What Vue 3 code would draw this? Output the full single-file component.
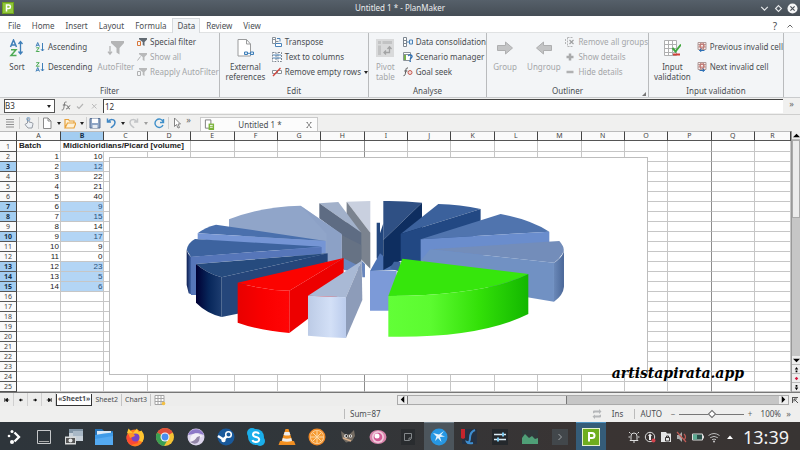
<script setup>
const columns = 'ABCDEFGHIJKLMNOPQR'.split('')
const batches = [10, 12, 22, 21, 40, 9, 15, 14, 17, 9, 0, 23, 5, 6]
const selectedRows = [3, 7, 8, 10, 13, 14, 15]
const rows = Array.from({ length: 24 }, (_, i) => {
  const n = i + 2
  const value = batches[i]
  return {
    n,
    batch: value === undefined ? '' : i + 1,
    value: value === undefined ? '' : value,
    selected: selectedRows.includes(n),
  }
})
const restColumns = columns.slice(2)
const menu = ['File', 'Home', 'Insert', 'Layout', 'Formula', 'Data', 'Review', 'View']
const strong = (c) => c === 'H' || c === 'P'
</script>

<template>
  <div class="app">
    <header class="titlebar">
      <svg class="logo" viewBox="0 0 12 12"><rect width="12" height="12" fill="#6fa01c" /><rect x="1" y="1" width="10" height="10" fill="#8fc63a" /><path d="M4.500 9.500V3h2.200a1.700 1.700 0 0 1 0 3.500H4.500" fill="none" stroke="#fff" stroke-width="1.500" /></svg>
      <h1>Untitled 1 * - PlanMaker</h1>
      <div class="winbtns">
        <button aria-label="Minimize"><svg viewBox="0 0 10 10"><path d="M2 3.500l3 3 3-3" fill="none" stroke="#e8eaec" /></svg></button>
        <button aria-label="Restore"><svg viewBox="0 0 10 10"><path d="M5 2.300L7.700 5 5 7.700 2.300 5z" fill="none" stroke="#e8eaec" /></svg></button>
        <button aria-label="Close"><svg viewBox="0 0 12 12"><circle cx="6" cy="6" r="5.500" fill="#f5f6f7" /><path d="M3.700 3.700l4.600 4.600M8.300 3.700L3.700 8.300" stroke="#454c54" stroke-width="1.200" /></svg></button>
      </div>
    </header>

    <nav class="menu">
      <button v-for="m in menu" :key="m" :class="{ active: m === 'Data' }">{{ m }}</button>
      <span class="grow"></span>
      <button class="help">?</button>
      <button class="fold" aria-label="Collapse ribbon"><svg viewBox="0 0 8 8"><path d="M1.500 5.500L4 3l2.500 2.500" fill="none" stroke="#666" /></svg></button>
    </nav>

    <section class="ribbon">
      <div class="group">
        <div class="tools">
          <button class="big sort">
            <svg viewBox="0 0 18 18"><path d="M2.500 8L5.500 1l3 7M3.500 6h4" fill="none" stroke="#3f7fb8" stroke-width="1.500" /><path d="M3 10.700h5L3 16.500h5.500" fill="none" stroke="#4daa55" stroke-width="1.500" /><path d="M12.500 3v11M10.500 5l2-2.500 2 2.500M10.500 12.500l2 2.500 2-2.500" fill="none" stroke="#3f7fb8" stroke-width="1.300" /></svg>
            <span>Sort</span>
          </button>
          <div class="stack two order">
            <button><svg viewBox="0 0 10 10"><path d="M1 4.500L2.700.5l1.800 4M1.500 3.300h2.300" fill="none" stroke="#3f7fb8" /><path d="M1.200 5.800h3L1.200 9.500h3.300" fill="none" stroke="#4daa55" /><path d="M7.500 1v8M6 7.200L7.500 9 9 7.200" fill="none" stroke="#3f7fb8" /></svg>Ascending</button>
            <button><svg viewBox="0 0 10 10"><path d="M1.200.700h3L1.200 4.200h3.300" fill="none" stroke="#4daa55" /><path d="M1 9.500l1.700-4 1.800 4M1.500 8.300h2.300" fill="none" stroke="#3f7fb8" /><path d="M7.500 1v8M6 7.200L7.500 9 9 7.200" fill="none" stroke="#3f7fb8" /></svg>Descending</button>
          </div>
          <button class="big auto" disabled>
            <svg viewBox="0 0 18 18"><path d="M4 2h13v2l-4.500 5v6.500l-3-2V9L4 4z" fill="#b4b5b6" /><path d="M3 7v8M1 12.700l2 2.500 2-2.500" fill="none" stroke="#b4b5b6" stroke-width="1.300" /></svg>
            <span>AutoFilter</span>
          </button>
          <div class="stack">
            <button><svg viewBox="0 0 10 10"><path d="M2 1h8v1.500L7.500 5v4L5.700 8V5L2 2.300z" fill="#626a72" /><path d="M.5 4.500h3v4h-3z" fill="none" stroke="#d9773a" /></svg>Special filter</button>
            <button disabled><svg viewBox="0 0 10 10"><path d="M2 1h8v1.500L7.500 5v4L5.700 8V5L2 2.300z" fill="#b8b9ba" /><path d="M.5 8.500l3-4" fill="none" stroke="#b0b1b2" /></svg>Show all</button>
            <button disabled><svg viewBox="0 0 10 10"><path d="M2 1h8v1.500L7.500 5v4L5.700 8V5L2 2.300z" fill="#b8b9ba" /><path d="M.5 4.500h3v4h-3z" fill="none" stroke="#b0b1b2" /></svg>Reapply AutoFilter</button>
          </div>
        </div>
        <h2>Filter</h2>
      </div>

      <div class="group">
        <div class="tools">
          <button class="big ext">
            <svg viewBox="0 0 18 18"><path d="M2 .5h8.500L14.500 5v12H2z" fill="#fff" stroke="#9a9b9c" /><path d="M10.500.5V5h4" fill="none" stroke="#9a9b9c" /><path d="M8.500 13h3v2.500h-3zM14.500 13h3v2.500h-3zM11.500 14.300h3" fill="#dceaf6" stroke="#3f7fb8" /></svg>
            <span>External<br />references</span>
          </button>
          <div class="stack">
            <button><svg viewBox="0 0 10 10"><path d="M.5.500h3v6h-3zM.5 2.500h3M3.500 4.500h3" fill="#fff" stroke="#8b9299" /><path d="M3.500 6.500h6v3h-6z" fill="#fff" stroke="#4b83b8" /><path d="M5 1.500h3v3" fill="none" stroke="#4b83b8" /></svg>Transpose</button>
            <button><svg viewBox="0 0 10 10"><path d="M.5.500h3.500v9H.5zM6 .5h3.500v9H6z" fill="#fff" stroke="#7c8690" stroke-dasharray="2 1" /><path d="M1 3h8M1 6h8" stroke="#4b83b8" /></svg>Text to columns</button>
            <button><svg viewBox="0 0 10 10"><path d="M.5 3.500h4v3h-4zM5.500 3.500h4v3h-4z" fill="#fff" stroke="#8b9299" /><path d="M1 9l7.500-8" stroke="#d3453d" stroke-width="1.300" /></svg>Remove empty rows<i class="caret"></i></button>
          </div>
        </div>
        <h2>Edit</h2>
      </div>

      <div class="group">
        <div class="tools">
          <button class="big pivot" disabled>
            <svg viewBox="0 0 18 18"><rect width="18" height="18" fill="#d9dadb" /><path d="M2 2h3v3H2zM6.500 2H16v3H6.500zM2 6.500h3V16H2z" fill="#c2c3c4" /><path d="M8 13.500h5.500v-5M10 11.500l-2 2 2 2M11.500 10l2-2.300 2 2.300" fill="none" stroke="#a2a3a4" stroke-width="1.300" /></svg>
            <span>Pivot<br />table</span>
          </button>
          <div class="stack">
            <button><svg viewBox="0 0 10 10"><path d="M.5.500h3v9h-3zM.5 3.500h3M.5 6.500h3" fill="#fff" stroke="#7c8690" /><path d="M4 5h2.500M6.500 3h3v4h-3z" fill="#e4effa" stroke="#4b83b8" /></svg>Data consolidation</button>
            <button><svg viewBox="0 0 10 10"><path d="M.5.500h7v8h-7zM.5 2.500h7" fill="#fff" stroke="#8b9299" /><path d="M1 3h2v5H1z" fill="#76b04a" /><path d="M5.300 4.200c.5-2 4-1.500 3.700.5C8.900 6 7.200 5.700 7.200 7.500M7.200 8.500V10" fill="none" stroke="#2b6fb5" stroke-width="1.400" /></svg>Scenario manager</button>
            <button><svg viewBox="0 0 10 10"><path d="M5 1C3 .5 3 2 2.700 4.500S2 9 .5 8.700M1.300 4h3" fill="none" stroke="#555" /><circle cx="7" cy="5.500" r="2" fill="#f7d9d6" stroke="#c25b52" /></svg>Goal seek</button>
          </div>
        </div>
        <h2>Analyse</h2>
      </div>

      <div class="group">
        <div class="tools">
          <button class="big grp" disabled>
            <svg viewBox="0 0 18 18"><path d="M1.500 6.500h8V3l7 6-7 6v-3.500h-8z" fill="#c3c4c5" stroke="#aeafb0" /></svg>
            <span>Group</span>
          </button>
          <button class="big ungrp" disabled>
            <svg viewBox="0 0 18 18"><path d="M16.500 6.500h-8V3l-7 6 7 6v-3.500h8z" fill="#c3c4c5" stroke="#aeafb0" /></svg>
            <span>Ungroup</span>
          </button>
          <div class="stack">
            <button disabled><svg viewBox="0 0 10 10"><path d="M2.500.500h6M2.500.500v9h6M.5 2v6" fill="none" stroke="#b4b5b6" stroke-dasharray="2 1" /><path d="M4.500 3l4 4M8.500 3l-4 4" stroke="#9fa0a1" stroke-width="1.200" /></svg>Remove all groups</button>
            <button disabled><svg viewBox="0 0 10 10"><path d="M1.500 5h7M5 1.500v7" stroke="#a9aaab" stroke-width="2.500" /></svg>Show details</button>
            <button disabled><svg viewBox="0 0 10 10"><path d="M1.500 5h7" stroke="#b0b1b2" stroke-width="2.500" /></svg>Hide details</button>
          </div>
        </div>
        <h2>Outliner</h2>
        <i class="launcher"></i>
      </div>

      <div class="group">
        <div class="tools">
          <button class="big valid">
            <svg viewBox="0 0 18 18"><path d="M1.500 1.500h12v15h-12zM5.500 1.500v15M9.500 1.500v15M1.500 5.500h12M1.500 9.500h12M1.500 13.500h12" fill="#fff" stroke="#aeafb0" /><path d="M9.500 9l3 3.500 5.500-7" fill="none" stroke="#41a83e" stroke-width="2" /><path d="M10 15.500h7" stroke="#cf4037" stroke-width="2" /></svg>
            <span>Input<br />validation</span>
          </button>
          <div class="stack two">
            <button><svg viewBox="0 0 10 10"><path d="M1 .5h8v7H1zM1 2.500h8M1 5h8M3.500.500v7M6.500.500v7" fill="#fbeae8" stroke="#b09a98" /><circle cx="5" cy="4" r="2.200" fill="none" stroke="#cf6a62" /><path d="M7.500 8.500h-5M4.500 6.500l-2 2 2 1.500" fill="none" stroke="#2b6fb5" /></svg>Previous invalid cell</button>
            <button><svg viewBox="0 0 10 10"><path d="M1 .5h8v7H1zM1 2.500h8M1 5h8M3.500.500v7M6.500.500v7" fill="#fbeae8" stroke="#b09a98" /><circle cx="5" cy="4" r="2.200" fill="none" stroke="#cf6a62" /><path d="M2.500 8.500h5M5.500 6.500l2 2-2 1.500" fill="none" stroke="#2b6fb5" /></svg>Next invalid cell</button>
          </div>
        </div>
        <h2>Input validation</h2>
      </div>
    </section>

    <section class="formula">
      <label class="namebox"><select aria-label="Cell"><option>B3</option></select><i class="caret"></i></label>
      <button class="fx" aria-label="Function"><svg viewBox="0 0 10 10"><path d="M5.500 1C3.500.5 3.500 2 3.200 4.500S2.500 9.500.7 9M1.800 4h3.400M5.500 4.500C7.500 4 6.500 8 9 8M9.300 4.500C7.500 4.500 7.500 8 5 8" fill="none" stroke="#666" stroke-width=".9" /></svg></button>
      <button class="fx" aria-label="Accept"><svg viewBox="0 0 10 10"><path d="M2 5.500l2 2L8 3" fill="none" stroke="#b5b5b5" stroke-width="1.200" /></svg></button>
      <button class="fx" aria-label="Cancel"><svg viewBox="0 0 10 10"><path d="M3 3l4.500 4.500M7.500 3L3 7.500" fill="none" stroke="#bbb" /></svg></button>
      <input class="entry" aria-label="Formula" value="12" />
      <span class="more">»</span>
    </section>

    <section class="toolbar">
      <div class="quick">
        <button aria-label="Menu"><svg viewBox="0 0 12 12"><path d="M2 2.500h8M2 5h8M2 7.500h8M2 10h8" stroke="#909090" /></svg></button>
        <button class="sep" aria-label="Touch mode"><svg viewBox="0 0 12 12"><path d="M4.500 6V1.500a1 1 0 0 1 1.500 0V5l3 .7c1 .3 1 1 .8 2L9 11H5L2 7.500l1-.7z" fill="#eef2f6" stroke="#8a9099" stroke-width=".9" /><circle cx="5.300" cy="2" r="1.700" fill="none" stroke="#6f9fcc" stroke-width=".7" /></svg></button>
        <button class="sep" aria-label="New"><svg viewBox="0 0 12 12"><path d="M2.500 1h4.500l3 3v7.500H2.500zM7 1v3h3" fill="#fff" stroke="#8a8a8a" /></svg></button>
        <button class="drop" aria-label="New options"><i class="caret"></i></button>
        <button aria-label="Open"><svg viewBox="0 0 12 12"><path d="M1 11V2.500h3.500l1 1.500H10v2M1 11l2.500-5H12l-2 5z" fill="#fdf1d8" stroke="#e8a33d" stroke-width="1.200" /></svg></button>
        <button class="drop" aria-label="Open options"><i class="caret"></i></button>
        <button class="sep" aria-label="Save"><svg viewBox="0 0 12 12"><path d="M1 1.500h10v9.500H1z" fill="#8fa6c6" stroke="#5a7193" /><path d="M3 1.500h6V6H3z" fill="#fff" /><path d="M3.500 8h5v3h-5z" fill="#e5ebf3" /></svg></button>
        <button class="undo" aria-label="Undo"><svg viewBox="0 0 12 12"><path d="M3 5C5 1.500 10 2 10 5.500S7 9 6 11M2.500 1.500V5H6" fill="none" stroke="#3f86c4" stroke-width="1.500" /></svg></button>
        <button class="drop" aria-label="Undo options"><i class="caret"></i></button>
        <button aria-label="Redo"><svg viewBox="0 0 12 12"><path d="M9 5C7 1.500 2 2 2 5.500S5 9 6 11M9.500 1.500V5H6" fill="none" stroke="#c3c5c7" stroke-width="1.500" /></svg></button>
        <button class="drop dim" aria-label="Redo options"><i class="caret"></i></button>
        <button aria-label="Repeat"><svg viewBox="0 0 12 12"><path d="M10 8A4.200 4.200 0 1 1 10 4.500M10.500 2v3.500H7" fill="none" stroke="#3f8fc9" stroke-width="1.400" /></svg></button>
        <button class="sep" aria-label="Pointer"><svg viewBox="0 0 12 12"><path d="M3.500 1l6 6H7l1.500 3.500-1.500.5-1.500-3.500-2 2z" fill="#fff" stroke="#777" stroke-width=".9" /></svg></button>
        <span class="more">»</span>
      </div>
      <div class="doctab">
        <svg viewBox="0 0 12 12"><path d="M1.500 1h6v9h-6z" fill="#fff" stroke="#777" /><path d="M5 5h6v7H5z" fill="#7db53c" /><path d="M6.500 7h3M6.500 9h3" stroke="#fff" /></svg>
        <span>Untitled 1 *</span>
        <button aria-label="Close document"><svg viewBox="0 0 8 8"><path d="M2 1.500l4 5M6 1.500l-4 5M1.500 1.500h1.500M5 1.500h1.500M1.500 6.500H3M5 6.500h1.500" fill="none" stroke="#777" stroke-width=".8" /></svg></button>
      </div>
    </section>

    <main class="sheet">
      <div class="canvas">
        <table>
          <colgroup>
            <col class="c-row" /><col class="c-a" /><col v-for="n in 16" :key="n" /><col class="c-last" />
          </colgroup>
          <thead>
            <tr><th></th><th v-for="c in columns" :key="c" :class="{ on: c === 'B' }">{{ c }}</th></tr>
          </thead>
          <tbody>
            <tr class="first">
              <th>1</th><td class="head">Batch</td><td class="head" colspan="3">Midichloridians/Picard [volume]</td>
              <td v-for="c in restColumns.slice(2)" :key="c" :class="{ strong: strong(c) }"></td>
            </tr>
            <tr v-for="r in rows" :key="r.n">
              <th :class="{ on: r.selected }">{{ r.n }}</th>
              <td>{{ r.batch }}</td>
              <td :class="{ picked: r.selected }">{{ r.value }}</td>
              <td v-for="c in restColumns" :key="c" :class="{ strong: strong(c) }"></td>
            </tr>
          </tbody>
        </table>

        <svg class="chart" viewBox="110 158 537 216">
          <defs>
            <linearGradient id="navy"><stop offset="0" stop-color="#000033" /><stop offset=".5" stop-color="#07265a" /><stop offset="1" stop-color="#1d3d70" /></linearGradient>
            <linearGradient id="rim"><stop offset="0" stop-color="#0c1d50" /><stop offset="1" stop-color="#4265a8" /></linearGradient>
            <linearGradient id="red"><stop offset="0" stop-color="#e80000" /><stop offset=".5" stop-color="#fa0000" /><stop offset="1" stop-color="#ff0505" /></linearGradient>
            <linearGradient id="pale"><stop offset="0" stop-color="#bccbe6" /><stop offset=".6" stop-color="#d3e0f7" /><stop offset="1" stop-color="#bacbec" /></linearGradient>
            <linearGradient id="green"><stop offset="0" stop-color="#62ff37" /><stop offset=".3" stop-color="#5cfb30" /><stop offset=".65" stop-color="#33e008" /><stop offset="1" stop-color="#13b700" /></linearGradient>
            <linearGradient id="steel"><stop offset="0" stop-color="#6a88b8" /><stop offset="1" stop-color="#4a6798" /></linearGradient>
          </defs>
          <g transform="translate(180 190) scale(.3333)">
            <path d="M500 35L571 33V128z" fill="#c9d0df" />
            <path d="M500 35L571 128V236L545 210 500 130z" fill="#7b838f" />
            <path d="M418 40L475 36 544 128z" fill="#a2b1ca" />
            <path d="M418 40L544 128V215L520 245 485 235V135L418 85z" fill="#5e6c83" />
            <path d="M485 135L544 165V212L500 240 485 235z" fill="#6d7686" opacity=".6" />
            <path d="M147 88Q240 50 362 47L485 132V240L430 230 147 122z" fill="#90a5c9" />
            <path d="M362 47L485 132V240L440 210V132z" fill="#8b9fc5" opacity=".6" />
            <path d="M53 130Q75 112 108 104L437 153z" fill="#4a70ad" />
            <path d="M53 130L437 153V190L53 147z" fill="#7595d5" />
            <path d="M20 180Q24 158 45 147L425 170 33 201z" fill="#3d639f" />
            <path d="M33 200L425 171V191L48 222V315H33z" fill="#5676b9" />
            <path d="M20 180Q25 195 33 200V313L26 310 20 285z" fill="url(#rim)" />
            <path d="M48 222L443 190 125 262Q80 250 48 222z" fill="#264b7e" />
            <path d="M48 222Q80 250 125 262V381Q80 370 48 338z" fill="url(#navy)" />
            <path d="M125 262L443 190V216L180 290V370L125 381z" fill="#25467a" />
            <path d="M491 205L545 232 520 245 491 240zM545 212L555 222V262L547 262z" fill="#6886bd" />
            <path d="M173 278L491 204 328 302Q250 300 173 278z" fill="#fb0300" />
            <path d="M173 278Q250 300 328 302V429Q240 422 173 398z" fill="url(#red)" />
            <path d="M328 302L491 204V305L328 429z" fill="#ed0000" />
            <path d="M384 317L545 212 498 322z" fill="#a9b9d5" />
            <path d="M384 317L498 322V444Q440 443 384 437z" fill="url(#pale)" />
            <path d="M498 322L545 212 547 330 498 444z" fill="#8d9cb9" />
          </g>
          <g transform="translate(370 190) scale(.3333)">
            <path d="M20 98H30V130L40 100V240L20 205z" fill="#23477e" />
            <path d="M0 243L30 190 90 240z" fill="#4d73b5" />
            <path d="M0 243H80V362H0z" fill="#7c9ad8" />
            <path d="M40 33Q100 32 156 38L40 150z" fill="#2f5084" />
            <path d="M40 150L156 38V212H92L40 240z" fill="#0e2e60" />
            <path d="M205 42Q270 43 332 57L92 132z" fill="#3b619c" />
            <path d="M92 132L332 57V130L152 212H92z" fill="#224883" />
            <path d="M392 72Q480 88 538 125L152 148z" fill="#5074ae" />
            <path d="M152 148L538 125V165L200 215 152 212z" fill="#6a8dcd" />
            <path d="M180 178L568 153Q585 172 580 185 572 205 552 218z" fill="#738dba" />
            <path d="M180 178L552 218V335L400 310 152 212z" fill="#7191c3" />
            <path d="M552 218Q582 200 582 178V290Q580 315 552 335z" fill="url(#steel)" />
            <path d="M92 215L72 215 60 235 90 245z" fill="#40649f" />
            <path d="M97 206L475 252Q350 315 55 318z" fill="#36e60c" />
            <path d="M55 318Q350 315 475 252V372Q330 445 55 440z" fill="url(#green)" />
          </g>
        </svg>
        <span class="mark">artistapirata.app</span>
      </div>

      <div class="vscroll">
        <button class="sb" aria-label="Scroll up"><svg viewBox="0 0 8 8"><path d="M0 6l4-4 4 4z" /></svg></button>
        <div class="vtrack"><div class="vthumb"></div></div>
        <button class="sb" aria-label="Scroll down"><svg viewBox="0 0 8 8"><path d="M0 2l4 4 4-4z" /></svg></button>
        <button class="sb" aria-label="Previous object"><svg viewBox="0 0 8 8"><path d="M4 1l2 3H2zM3 5h2v2H3z" /></svg></button>
        <button class="sb" aria-label="Pick object"><svg viewBox="0 0 8 8"><path d="M4 2l2 2-2 2-2-2z" fill="#d5143c" /></svg></button>
        <button class="sb" aria-label="Next object"><svg viewBox="0 0 8 8"><path d="M4 7l2-3H2zM3 1h2v2H3z" /></svg></button>
      </div>
    </main>

    <section class="sheets">
      <div class="nav">
        <button aria-label="First sheet"><svg viewBox="0 0 8 8"><path d="M1 1.500v5M2 4h5M4.500 1.500L2 4l2.500 2.500z" stroke="#000" /></svg></button>
        <button aria-label="Previous sheet"><svg viewBox="0 0 8 8"><path d="M2 4h4.500M4 2.500L2 4l2 1.500z" stroke="#000" /></svg></button>
        <button aria-label="Next sheet"><svg viewBox="0 0 8 8"><path d="M6 4H1.500M4 2.500L6 4 4 5.500z" stroke="#000" /></svg></button>
        <button aria-label="Last sheet"><svg viewBox="0 0 8 8"><path d="M7 1.500v5M6 4H1M3.500 1.500L6 4 3.500 6.500z" stroke="#000" /></svg></button>
      </div>
      <button class="tab current">«Sheet1»</button>
      <button class="tab">Sheet2</button>
      <button class="tab line">Chart3</button>
      <button class="add" aria-label="Add sheet"><svg viewBox="0 0 12 12"><path d="M1 1.500h9v9H1zM4 1.500v9M7 1.500v9M1 4.500h9M1 7.500h9" fill="#fff" stroke="#a5a5a5" /><circle cx="9.500" cy="9.500" r="1.800" fill="#f3c044" /></svg></button>
      <div class="hscroll">
        <button class="hb" aria-label="Scroll left"><svg viewBox="0 0 8 8"><path d="M6 0L2 4l4 4z" /></svg></button>
        <div class="htrack"><div class="hthumb"></div></div>
        <button class="hb" aria-label="Scroll right"><svg viewBox="0 0 8 8"><path d="M2 0l4 4-4 4z" /></svg></button>
      </div>
      <button class="corner" aria-label="Focus view"><svg viewBox="0 0 8 8"><path d="M1 1.500h6M1.500 1v6M3 3l4 4M3 5.500V3h3" fill="none" stroke="#555" /></svg></button>
    </section>

    <footer class="status">
      <span class="sum">Sum=87</span>
      <svg class="sync" viewBox="0 0 10 10"><path d="M1 4.500V2.500a1 1 0 0 1 1-1h5V0l2.500 2.500L7 5V3.500H3M9 5.500v2a1 1 0 0 1-1 1H3V10L.5 7.500 3 5.500v1h4" fill="#b5b7b9" /></svg>
      <span class="ins">Ins</span>
      <span class="mode">AUTO</span>
      <button class="step">−</button>
      <input class="zoom" type="range" min="0" max="100" value="50" aria-label="Zoom" />
      <button class="step">+</button>
      <span class="pct">100%</span>
      <span class="more">»</span>
    </footer>

    <section class="taskbar">
      <div class="launch">
        <button aria-label="Launcher"><svg viewBox="0 0 20 20"><circle cx="6" cy="9" r="1.300" /><circle cx="9" cy="4.500" r="1.500" /><circle cx="9" cy="15" r="2" /><path d="M11.500 5.500L16 10l-4.500 4.500" fill="none" stroke="#fff" stroke-width="2.300" /></svg></button>
        <button aria-label="Desktop"><svg viewBox="0 0 20 20"><path d="M3.500 3.500h13v13h-13z" fill="none" stroke="#c6c8ca" /><path d="M5 14.500h10" stroke="#aaa" /></svg></button>
        <button aria-label="Screenshot"><svg viewBox="0 0 20 20"><path d="M5 2h14v12H5z" fill="#c8d1d9" /><path d="M5 2h14v4H5z" fill="#8194a5" /><path d="M9 4h10v5H9z" fill="#a9b8c6" /><path d="M1 9.500h11v8H1z" fill="#d8dadb" /><path d="M2 11h9v5H2z" fill="#555" /><circle cx="6.500" cy="13.500" r="2" fill="#e7e8e9" /></svg></button>
        <button aria-label="Files"><svg viewBox="0 0 20 20"><path d="M1 2h7l2 2h9v13H1z" fill="#2672b5" /><path d="M3 4h14v5H3z" fill="#dbe9f6" /><path d="M1 8l9-1.500 9-1V18H1z" fill="#3f9be8" /><path d="M1 12l18-3v9H1z" fill="#54aaf2" /></svg></button>
        <button aria-label="Firefox"><svg viewBox="0 0 20 20"><circle cx="10" cy="11" r="8.500" fill="#ff7a1f" /><path d="M2 6L3.500 1.500 8 6l4-4.500L13.500 5l3-1.500Q21 9 17.500 15L10 12z" fill="#ffc530" /><path d="M1.500 9Q4 5 9 7l4 3v6l-7 2Q1 15 1.500 9z" fill="#fb4a35" /><circle cx="10.500" cy="10.500" r="4" fill="#7644c9" /><path d="M3 6q5-1 7 3l-5 2z" fill="#ff9428" /></svg></button>
        <button aria-label="Chrome"><svg viewBox="0 0 20 20"><circle cx="10" cy="10" r="9" fill="#f6c334" /><path d="M10 10L2.200 5.500A9 9 0 0 1 17.800 5.500z" fill="#df4e3b" /><path d="M10 10L2.200 5.500A9 9 0 0 0 9 19l3-5z" fill="#3b9f54" /><circle cx="10" cy="10" r="4.500" fill="#f4f4f4" /><circle cx="10" cy="10" r="3.400" fill="#4b8eee" /></svg></button>
        <button aria-label="Bird"><svg viewBox="0 0 20 20"><circle cx="10" cy="10" r="8.500" fill="#dcd5ed" /><path d="M2 8A8.500 8.500 0 0 1 18 8l-6-2z" fill="#8d78c8" /><path d="M5 9q4-5 9-1l3 1-4 2q-1 5-7 6-3-3-1-8z" fill="#f3eff8" /><path d="M4 15q5-1 7-5l3-1-1 5q-3 5-9 1z" fill="#9386a8" /></svg></button>
        <button aria-label="Steam"><svg viewBox="0 0 20 20"><circle cx="10" cy="10" r="8.500" fill="#19599b" /><path d="M2 9l5.500 3.500L12 8" stroke="#fff" stroke-width="2.500" fill="none" /><circle cx="12.500" cy="7.500" r="2.800" fill="#19599b" stroke="#fff" stroke-width="1.500" /><circle cx="7.500" cy="13" r="2.200" fill="#fff" /></svg></button>
        <button aria-label="Skype"><svg viewBox="0 0 20 20"><circle cx="10" cy="10" r="8" fill="#1aaeea" /><circle cx="6" cy="6" r="5" fill="#1aaeea" /><circle cx="14" cy="14" r="5" fill="#1aaeea" /><path d="M13 7Q12 5 9.500 5.200 7 5.500 7 7.500 7 9.500 10 10t3.200 2.500Q13 15 10 15T6.500 13" fill="none" stroke="#fff" stroke-width="2" /></svg></button>
        <button aria-label="VLC"><svg viewBox="0 0 20 20"><path d="M3 14h14l1.500 4h-17z" fill="#ee8d22" /><path d="M8.500 2h3L16 16q-6 2-12 0z" fill="#f39120" /><path d="M7.600 5h4.800l1 3q-3 1-6.800 0zM5.800 11q4 1.500 8.400 0l.8 3q-5 1.500-10 0z" fill="#eee" /></svg></button>
        <button aria-label="Clementine"><svg viewBox="0 0 20 20"><circle cx="10" cy="10" r="8.500" fill="#ef8a28" /><circle cx="10" cy="10" r="7" fill="#fbd9a8" /><circle cx="10" cy="10" r="6.200" fill="#f79b32" /><path d="M10 4v12M4 10h12M5.800 5.800l8.400 8.400M14.200 5.800l-8.400 8.400" stroke="#fbd9a8" /></svg></button>
        <button aria-label="GIMP"><svg viewBox="0 0 20 20"><path d="M3 4l5 4 4-1 4-4 1 6-3 5-6 1.500L4 11z" fill="#746c62" /><circle cx="8" cy="9" r="1.800" fill="#fff" /><circle cx="12.500" cy="9" r="1.600" fill="#fff" /><circle cx="8.300" cy="9" r=".9" fill="#111" /><circle cx="12.500" cy="9" r=".8" fill="#111" /><path d="M5 11l8 3" stroke="#d8b08b" stroke-width="1.500" /></svg></button>
        <button aria-label="Viewer"><svg viewBox="0 0 20 20"><ellipse cx="10" cy="10" rx="8.500" ry="7" fill="#d984ac" /><circle cx="10" cy="10" r="6" fill="#f0cadc" /><circle cx="10" cy="10" r="4.300" fill="#d35a94" /><circle cx="9" cy="9" r="2.500" fill="#fff" /></svg></button>
        <button aria-label="Notes"><svg viewBox="0 0 20 20"><path d="M3 2h14v16H3z" fill="#292c2f" /><path d="M6.500 6.500h7v5l-2 2h-5zM11 13v-2h2" fill="none" stroke="#83878a" /></svg></button>
        <button class="open" aria-label="Falkon"><svg viewBox="0 0 20 20"><circle cx="10" cy="10" r="8.500" fill="#2797e2" /><path d="M4 6l6 1.500L15 4l-3 4 4 1.500-5 .5 1.500 5-3.500-4-3 3 1.500-4.500z" fill="#e4f3fd" /></svg></button>
        <button aria-label="Krusader"><svg viewBox="0 0 20 20"><path d="M3 2h15v15H3z" fill="#253142" /><path d="M2 2h4v9l-2 1-2-1z" fill="#c4242c" /><path d="M16 3q-5 2-5 8 0 5-3 4 1 2 6 1" fill="none" stroke="#3d8dd0" stroke-width="2" /></svg></button>
        <button aria-label="Settings"><svg viewBox="0 0 20 20"><path d="M2 2h16v16H2z" fill="#24282c" /><path d="M4 7.500h12M4 12.500h12" stroke="#dcecf5" stroke-width="1.500" /><path d="M12 5.500h2v4h-2zM7 10.500h2v4H7z" fill="#7cc8ee" /></svg></button>
        <button aria-label="Monitor"><svg viewBox="0 0 20 20"><path d="M2 3h16v14H2z" fill="#30393b" /><path d="M2 11l3-4 4 4 3-2 3 3 3-1v6H2z" fill="#4f9f77" /></svg></button>
        <button aria-label="Terminal"><svg viewBox="0 0 20 20"><path d="M2 2h16v16H2z" fill="#42474b" /><path d="M8.500 7l3 3-3 3" fill="none" stroke="#a0a4a7" /></svg></button>
        <button class="now" aria-label="PlanMaker"><svg viewBox="0 0 20 20"><path d="M1 1h18v18H1z" fill="#e6f2cd" /><path d="M2 2h16v16H2z" fill="#6fae1e" /><path d="M8 14.500V6h3a2.400 2.400 0 0 1 0 5H8" fill="none" stroke="#fff" stroke-width="2" /></svg></button>
      </div>
      <div class="tray">
        <svg viewBox="0 0 12 12"><path d="M3 8.500V5a3 3 0 0 1 6 0v3.500l1 1H2zM5 11h2M1 1l1.500 1.500M11 1L9.500 2.500M.5 6h1.500M10 6h1.500" fill="none" stroke="#ddd" /></svg>
        <svg viewBox="0 0 12 12"><circle cx="6" cy="6" r="4.700" fill="none" stroke="#ddd" /><path d="M6 2.500l2 2.500H7v4H5V5H4z" fill="#eee" /><circle cx="9.500" cy="9.500" r="2" fill="#d5424c" /></svg>
        <svg viewBox="0 0 12 12"><path d="M1 1h5l1 1.500h4V11H1z" fill="#e4e4e4" /><path d="M5.500 6.500h4V10h-4zM6.500 6V5h2v1" fill="#e4e4e4" stroke="#383434" /></svg>
        <svg viewBox="0 0 12 12"><path d="M1 4h2l3-3v10L3 8H1z" fill="#aaa" /><path d="M8 3q3 3 0 6M1 1l9 10" fill="none" stroke="#c05a55" stroke-width="1.200" /></svg>
        <svg viewBox="0 0 12 12"><path d="M.5 3h10v6H.5z" fill="#2a5049" stroke="#ddd" /><path d="M1 3.500h4v5H1z" fill="#5cab91" /><path d="M11.500 4.500v3" stroke="#ddd" /></svg>
        <svg viewBox="0 0 12 12"><path d="M.5 4.500q5.500-4 11 0M2.200 6.700q3.800-2.700 7.600 0M4 8.700q2-1.300 4 0" fill="none" stroke="#bbb" /><circle cx="6" cy="10.500" r="1" fill="#ccc" /></svg>
        <svg viewBox="0 0 12 12"><path d="M3 8l3-3.500L9 8z" fill="#fff" /></svg>
      </div>
      <time>13:39</time>
    </section>
  </div>
</template>

<style>
body { margin: 0; background: #eeeeed; }
</style>

<style scoped>
.app { font-family: "Noto Sans", sans-serif; font-size: 8px; line-height: 10px; color: #4a4d51; overflow: hidden; }
.app * { box-sizing: border-box; }
button { font: inherit; color: inherit; background: none; border: 0; padding: 0; margin: 0; white-space: nowrap; }
svg { display: block; flex: none; }
h1, h2 { margin: 0; font-weight: 400; }
.grow { flex: 1; }

.titlebar { display: grid; grid-template-columns: 1fr auto 1fr; align-items: center; height: 16px; padding: 0 2px; background: linear-gradient(#56606a, #454d55); color: #eceeef; }
.logo { width: 12px; height: 12px; }
.titlebar h1 { font-size: 8px; line-height: 12px; }
.winbtns { display: flex; justify-content: flex-end; align-items: center; gap: 3px; }
.winbtns svg { width: 11px; height: 11px; }

.menu { display: flex; gap: 1px; height: 17px; padding: 2px 3px 0; background: #fff; border-bottom: 1px solid #e0e2e3; font-size: 8px; }
.menu button { height: 15px; padding: 0 4px; border: 1px solid transparent; border-bottom: 0; }
.menu .active { background: #f3f5f7; border-color: #d6d9dc; }
.menu .help { font-size: 10px; }
.menu .fold { padding: 0 2px; }
.fold svg { width: 8px; height: 8px; }

.ribbon { display: grid; grid-template-columns: 220px 149px 118px 162px 135px 1fr; height: 65px; background: #f3f5f7; border-bottom: 1px solid #c9cbcd; }
.group { position: relative; display: flex; flex-direction: column; border-right: 1px solid #b9bbbd; padding-top: 3px; }
.tools { display: flex; height: 49px; }
.group h2 { font-size: 8px; line-height: 11px; text-align: center; }
.ribbon button:disabled { color: #a4a6a8; }
.big { display: flex; flex-direction: column; align-items: center; padding-top: 3px; gap: 5px; }
.big svg { width: 18px; height: 18px; }
.sort { width: 34px; }
.auto { width: 40px; }
.ext { width: 51px; }
.pivot { width: 34px; }
.grp { width: 37px; }
.ungrp { width: 42px; }
.valid { width: 49px; }
.stack { display: flex; flex-direction: column; gap: 5px; padding: 1px 0 0 1px; }
.stack button { display: flex; align-items: center; gap: 3px; height: 10px; }
.stack svg { width: 10px; height: 10px; }
.stack.two { gap: 10px; padding-top: 6px; }
.order { width: 62px; }
.caret { flex: none; border: 2px solid transparent; border-top: 3px solid #222; border-bottom: 0; }
.launcher { position: absolute; right: 2px; bottom: 1px; border: 2px solid #777; border-top-color: transparent; border-left-color: transparent; }

.formula { display: flex; align-items: center; gap: 4px; height: 17px; padding: 1px 4px; background: #f0f0ef; border-bottom: 1px solid #cfcfce; }
.namebox { position: relative; display: flex; align-items: center; width: 51px; height: 14px; margin-right: 2px; border: 1px solid #555; background: #fff; padding-right: 3px; }
.namebox select { flex: 1; min-width: 0; appearance: none; border: 0; background: none; font: inherit; color: #333; padding: 0; }
.fx { width: 10px; }
.fx svg { width: 10px; height: 10px; }
.entry { flex: 1; min-width: 0; height: 14px; padding: 0 1px; border: 0; border-top: 1px solid #444; border-left: 1px solid #444; background: #fff; font: inherit; color: #333; }
.more { font-size: 9px; color: #666; width: 9px; text-align: center; }
.formula .more, .quick .more { align-self: flex-start; }

.toolbar { display: flex; align-items: flex-end; height: 16px; background: #f0f0ef; }
.quick { display: grid; grid-template-columns: 19px 19px 17px 7px 16px 8px 17px 16px 7px 16px 7px 19px 16px 10px; align-items: center; height: 16px; }
.quick button { display: flex; justify-content: center; align-items: center; height: 12px; }
.quick svg { width: 12px; height: 12px; }
.quick .sep { border-left: 1px solid #cfcfce; }
.dim { opacity: .4; }
.doctab { display: flex; align-items: center; width: 118px; height: 14px; margin-left: 6px; padding: 0 4px 0 3px; background: #fcfcfc; border: 1px solid #cacaca; border-bottom: 0; }
.doctab svg { width: 11px; height: 11px; }
.doctab span { flex: 1; text-align: center; }
.doctab button svg { width: 8px; height: 8px; }

.sheet { display: flex; }
.canvas { position: relative; flex: 1; min-width: 0; }
table { width: 100%; table-layout: fixed; border-collapse: separate; border-spacing: 0; background: #fff; }
.c-row { width: 17px; }
.c-a { width: 44px; }
.c-last { width: 36px; }
tr { height: 10px; }
.first { height: 11px; }
th, td { padding: 0; overflow: hidden; white-space: nowrap; line-height: 9px; border-right: 1px solid #c6c6c6; border-bottom: 1px solid #c6c6c6; }
th { font-size: 7px; font-weight: 400; color: #444; border-right-color: #444; border-bottom-color: #555; background: #fafafa; }
thead th { border-top: 1px solid #bbb; line-height: 8px; }
th.on { background: #a3cdf1; font-weight: 700; color: #16304a; }
td { font: 8px/9px "Liberation Sans", sans-serif; color: #222; text-align: right; padding-right: 1px; }
td.head { font-weight: 700; text-align: left; line-height: 10px; padding: 0 0 0 2px; }
td.picked { background: #b3d5f5; color: #28517c; }
td.strong { border-right-color: #8d8d8d; }
.chart { position: absolute; left: 109px; top: 26px; width: 539px; height: 218px; background: #fff; border: 1px solid #bdbdbd; }
.mark { position: absolute; right: 47px; bottom: 10px; font: italic 700 14px/17px "DejaVu Serif", serif; color: #000; }

.vscroll { display: flex; flex-direction: column; width: 9px; border-left: 1px solid #999; background: #eee; }
.sb { height: 9px; display: flex; align-items: center; justify-content: center; border-bottom: 1px solid #bbb; }
.sb svg { width: 7px; height: 7px; }
.vtrack { flex: 1; background: #c6c6c6; }
.vthumb { height: 36%; background: #ececec; border: 1px solid #aaa; }

.sheets { display: flex; align-items: center; height: 14px; background: #ededec; border-top: 1px solid #777; }
.nav { display: flex; }
.nav button { width: 14px; height: 13px; display: flex; align-items: center; justify-content: center; border-right: 1px solid #d0d0d0; }
.nav svg { width: 6px; height: 6px; }
.tab { height: 12px; padding: 0 3px; font-size: 7px; }
.tab.current { font-weight: 700; padding: 0 1px; background: #fff; border: solid #333; border-width: 0 1px 1px; }
.tab.line { border-left: 1px solid #c4c4c4; }
.add { padding: 0 3px; border-left: 1px solid #c4c4c4; }
.add svg { width: 12px; height: 12px; }
.hscroll { display: flex; width: 49%; margin-left: auto; height: 10px; border: 1px solid #aaa; }
.hb { width: 9px; display: flex; align-items: center; justify-content: center; background: #eee; }
.hb svg { width: 7px; height: 7px; }
.htrack { flex: 1; background: #c6c6c6; }
.hthumb { width: 43%; height: 8px; background: #e4e4e4; border: solid #777; border-width: 0 1px; }
.corner { width: 10px; margin-left: 1px; display: flex; justify-content: center; }
.corner svg { width: 8px; height: 8px; }

.status { display: flex; align-items: center; height: 16px; background: #efefee; }
.sum { margin-left: 43%; flex: 1; padding-left: 5px; border-left: 1px solid #bbb; }
.sync { width: 10px; height: 10px; }
.ins { width: 33px; text-align: center; border-right: 1px solid #bbb; }
.mode { padding: 0 6px; }
.step { width: 10px; color: #666; }
.zoom { appearance: none; width: 65px; height: 8px; margin: 0 1px; background: linear-gradient(#777, #777) center / 100% 1px no-repeat; }
.zoom::-webkit-slider-thumb { appearance: none; width: 6px; height: 6px; background: #fff; border: 1px solid #666; transform: rotate(45deg); }
.pct { width: 26px; text-align: right; margin-right: 3px; }
.status .more { margin-right: 7px; }

.taskbar { display: flex; align-items: center; height: 29px; background: linear-gradient(90deg, #2e353b, #31363a 40%, #3a3433 75%, #383433); }
.launch { display: grid; grid-template-columns: repeat(20, 1fr); width: 76%; margin-left: -2px; height: 29px; }
.launch button { display: flex; align-items: center; justify-content: center; min-width: 0; }
.launch svg { width: 20px; height: 20px; fill: #fff; }
.launch .open { background: #4c555c; border-top: 1px solid #75838e; }
.launch .now { background: #355c78; border-top: 1px solid #4f92c0; }
.tray { display: flex; gap: 4px; margin-left: auto; }
.tray svg { width: 12px; height: 12px; }
time { margin: 0 11px 0 7px; font-size: 18px; line-height: 22px; color: #f3f3f3; }
</style>
